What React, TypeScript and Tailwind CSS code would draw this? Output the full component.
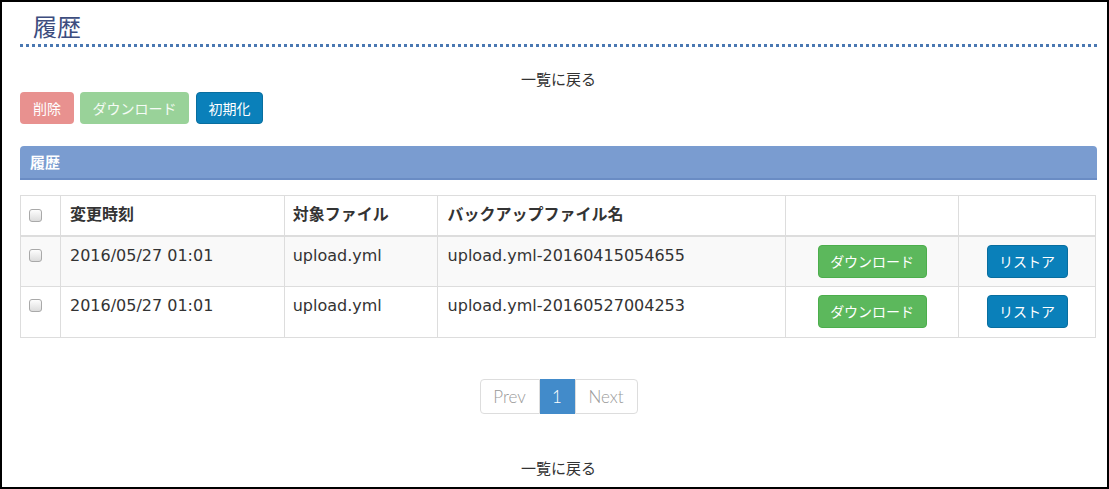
const rows = [
  { time: "2016/05/27 01:01", file: "upload.yml", backup: "upload.yml-20160415054655" },
  { time: "2016/05/27 01:01", file: "upload.yml", backup: "upload.yml-20160527004253" },
];

const Check = () => (
  <span className="inline-block w-[13px] h-[13px] rounded-[3px] border border-[#a9a9a9] bg-gradient-to-b from-[#fdfdfd] to-[#dcdcdc]" />
);

export default function App() {
  return (
    <div
      className="w-[1109px] h-[489px] overflow-hidden border-2 border-black bg-white text-[#333] pl-[18px] pr-[10px]"
      style={{ fontFamily: '"Noto Sans CJK JP", "Open Sans", sans-serif' }}
    >
      <div className="pt-[7px] border-b-[3px] border-dotted border-[#4a78b2] h-[45px]">
        <span className="inline-block ml-[13px] text-[24px] leading-[34px] text-[#3d4d7e]">履歴</span>
      </div>

      <div className="text-center text-[15px] leading-[20px] mt-[22px]">一覧に戻る</div>

      <div className="flex gap-[6px] mt-[3px]">
        <button className="h-[32px] w-[54px] rounded-[4px] bg-[#e8918f] text-white text-[14px]">削除</button>
        <button className="h-[32px] w-[109px] rounded-[4px] bg-[#99d299] text-white/90 text-[14px]">ダウンロード</button>
        <button className="h-[32px] w-[67px] rounded-[4px] bg-[#0a80ba] border border-[#086e9f] text-white text-[14px] ml-[1px]">初期化</button>
      </div>

      <div className="mt-[22px] h-[34px] rounded-t-[4px] bg-[#7a9cd0] border-b-[2px] border-[#6a8cc4] flex items-center px-[10px]">
        <span className="text-white text-[15px] font-bold">履歴</span>
      </div>

      <table
        className="mt-[15px] w-[1076px] border-collapse border border-[#ddd] text-[16px]"
        style={{ fontFamily: '"DejaVu Sans", "Noto Sans CJK JP", sans-serif' }}
      >
        <colgroup>
          <col className="w-[40px]" />
          <col className="w-[224px]" />
          <col className="w-[153px]" />
          <col className="w-[349px]" />
          <col className="w-[173px]" />
          <col className="w-[137px]" />
        </colgroup>
        <thead>
          <tr className="h-[40px] border-b-2 border-[#ddd]">
            <th className="border-r border-[#ddd] text-left pl-[8px] align-middle pt-[3px]"><Check /></th>
            <th className="border-r border-[#ddd] text-left px-[9px] font-bold">変更時刻</th>
            <th className="border-r border-[#ddd] text-left px-[8px] font-bold">対象ファイル</th>
            <th className="border-r border-[#ddd] text-left px-[10px] font-bold">バックアップファイル名</th>
            <th className="border-r border-[#ddd]"></th>
            <th></th>
          </tr>
        </thead>
        <tbody>
          {rows.map((r, i) => (
            <tr key={i} className={`h-[51px] border-b border-[#ddd] ${i === 0 ? "bg-[#f9f9f9]" : "bg-white"}`}>
              <td className="border-r border-[#ddd] text-left pl-[8px] align-top pt-[8px]"><Check /></td>
              <td className="border-r border-[#ddd] align-top px-[9px] pt-[7px]">{r.time}</td>
              <td className="border-r border-[#ddd] align-top px-[8px] pt-[7px]">{r.file}</td>
              <td className="border-r border-[#ddd] align-top px-[10px] pt-[7px]">{r.backup}</td>
              <td className="border-r border-[#ddd] align-top pt-[8px] text-center">
                <button className="h-[33px] w-[109px] rounded-[4px] bg-[#5cb85c] border border-[#4cae4c] text-white text-[14px]" style={{ fontFamily: '"Noto Sans CJK JP", sans-serif' }}>ダウンロード</button>
              </td>
              <td className="align-top pt-[8px] text-center">
                <button className="h-[33px] w-[81px] rounded-[4px] bg-[#0a80ba] border border-[#086e9f] text-white text-[14px]" style={{ fontFamily: '"Noto Sans CJK JP", sans-serif' }}>リストア</button>
              </td>
            </tr>
          ))}
        </tbody>
      </table>

      <div className="flex justify-center mt-[41px]">
        <div className="flex h-[35px] text-[17px] font-light" style={{ fontFamily: "Lato, sans-serif" }}>
          <span className="w-[60px] flex items-center justify-center border border-[#ddd] rounded-l-[4px] text-[#999]">Prev</span>
          <span className="w-[35px] flex items-center justify-center bg-[#428bca] border border-[#428bca] text-white">1</span>
          <span className="w-[63px] flex items-center justify-center border border-[#ddd] rounded-r-[4px] text-[#999]">Next</span>
        </div>
      </div>

      <div className="text-center text-[15px] leading-[20px] mt-[44px]">一覧に戻る</div>
    </div>
  );
}
